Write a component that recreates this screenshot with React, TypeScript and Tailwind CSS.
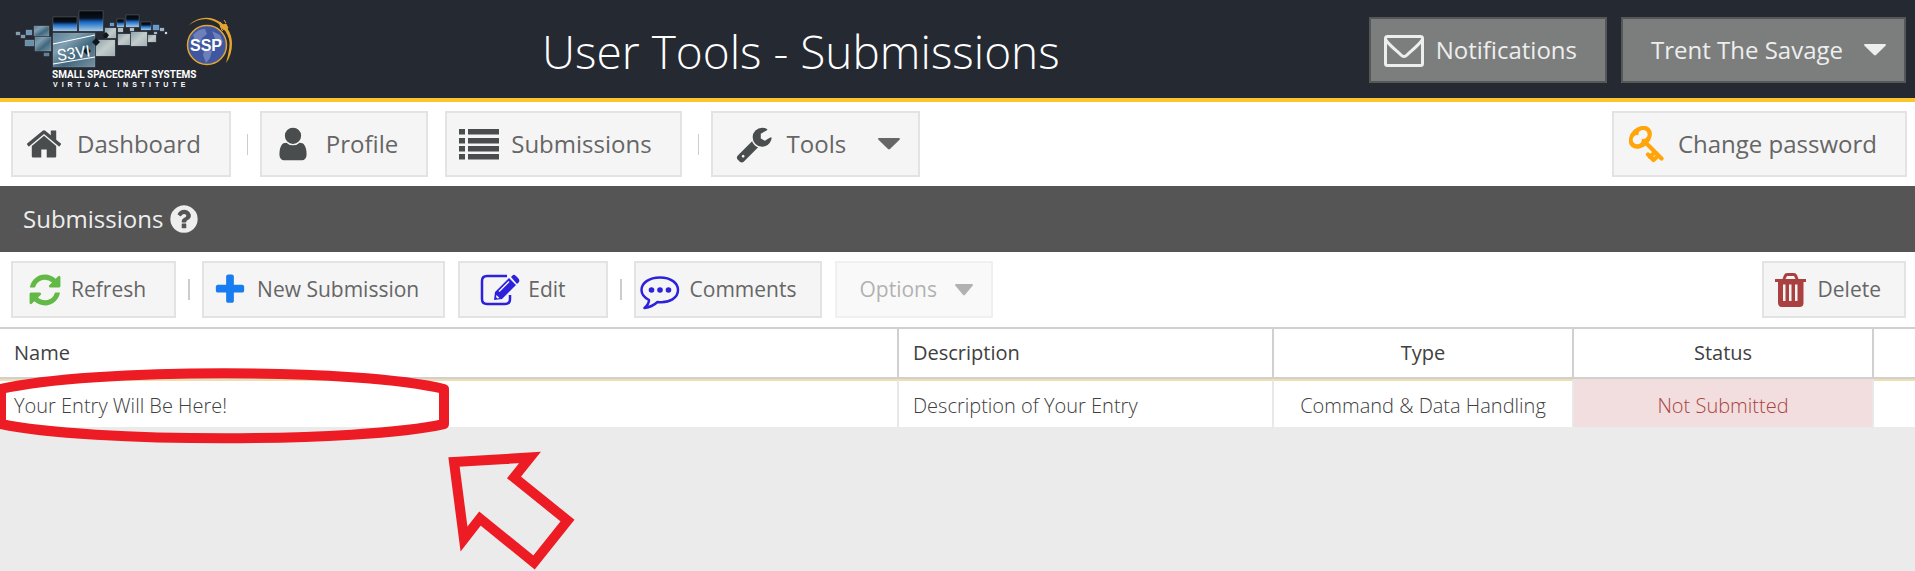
import React from "react";

const P = {
  home: "M1472 992v480q0 26-19 45t-45 19h-384v-384h-256v384h-384q-26 0-45-19t-19-45v-480q0-1 .5-3t.5-3l575-474 575 474q1 2 1 6zm223-69l-62 74q-8 9-21 11h-3q-13 0-21-7l-692-577-692 577q-12 8-24 7-13-2-21-11l-62-74q-8-10-7-23.5t11-21.5l719-599q32-26 76-26t76 26l244 204v-195q0-14 9-23t23-9h192q14 0 23 9t9 23v408l219 182q10 8 11 21.5t-7 23.5z",
  user: "M1536 1399q0 109-62.5 187t-150.5 78h-854q-88 0-150.5-78t-62.5-187q0-85 8.5-160.5t31.5-152 58.5-131 94-89 134.5-34.5q131 128 313 128t313-128q76 0 134.5 34.5t94 89 58.5 131 31.5 152 8.5 160.5zm-256-887q0 159-112.5 271.5t-271.5 112.5-271.5-112.5-112.5-271.5 112.5-271.5 271.5-112.5 271.5 112.5 112.5 271.5z",
  wrench: "M448 1472q0-26-19-45t-45-19-45 19-19 45 19 45 45 19 45-19 19-45zm644-420l-682 682q-37 37-90 37-52 0-91-37l-106-108q-38-36-38-90 0-53 38-91l681-681q39 98 114.5 173.5t173.5 114.5zm634-435q0 39-23 106-47 134-164.5 217.5t-258.5 83.5q-185 0-316.5-131.5t-131.5-316.5 131.5-316.5 316.5-131.5q58 0 121.5 16.5t107.5 46.5q16 11 16 28t-16 28l-293 169v224l193 107q5-3 79-48.5t135.5-81 70.5-35.5q15 0 23.5 10t8.5 25z",
  refresh: "M1639 1056q0 5-1 7-64 268-268 434.5t-478 166.5q-146 0-282.5-55t-243.5-157l-129 129q-19 19-45 19t-45-19-19-45v-448q0-26 19-45t45-19h448q26 0 45 19t19 45-19 45l-137 137q71 66 161 102t187 36q134 0 250-65t186-179q11-17 53-117 8-23 30-23h192q13 0 22.5 9.5t9.5 22.5zm25-800v448q0 26-19 45t-45 19h-448q-26 0-45-19t-19-45 19-45l138-138q-148-137-349-137-134 0-250 65t-186 179q-11 17-53 117-8 23-30 23h-199q-13 0-22.5-9.5t-9.5-22.5v-7q65-268 270-434.5t480-166.5q146 0 284 55.5t245 156.5l130-129q19-19 45-19t45 19 19 45z",
  plus: "M1600 736v192q0 40-28 68t-68 28h-416v416q0 40-28 68t-68 28h-192q-40 0-68-28t-28-68v-416h-416q-40 0-68-28t-28-68v-192q0-40 28-68t68-28h416v-416q0-40 28-68t68-28h192q40 0 68 28t28 68v416h416q40 0 68 28t28 68z",
  help: "M1024 1376v-192q0-14-9-23t-23-9h-192q-14 0-23 9t-9 23v192q0 14 9 23t23 9h192q14 0 23-9t9-23zm256-672q0-88-55.5-163t-138.5-116-170-41q-243 0-371 213-15 24 8 42l132 100q7 6 19 6 16 0 25-12 53-68 86-92 34-24 86-24 48 0 85.5 26t37.5 59q0 38-20 61t-68 45q-63 28-115.5 86.5t-52.5 125.5v36q0 14 9 23t23 9h192q14 0 23-9t9-23q0-19 21.5-49.5t54.5-49.5q32-18 49-28.5t46-35 44.5-48 28-60.5 12.5-81zm384 192q0 209-103 385.5t-279.5 279.5-385.5 103-385.5-103-279.5-279.5-103-385.5 103-385.5 279.5-279.5 385.5-103 385.5 103 279.5 279.5 103 385.5z",
};

function Glyph({ d, className }: { d: string; className: string }) {
  return (
    <svg viewBox="0 0 1792 1792" fill="currentColor" aria-hidden="true" className={`shrink-0 ${className}`}>
      <path d={d} />
    </svg>
  );
}

function Caret({ className }: { className: string }) {
  return (
    <svg viewBox="0 0 22 13" preserveAspectRatio="none" fill="currentColor" aria-hidden="true" className={`shrink-0 ${className}`}>
      <path d="M1 0H21Q22.500 .5 21.500 2L12 12Q11 13 10 12L.5 2Q-.5 .5 1 0Z" />
    </svg>
  );
}

function ListIcon() {
  return (
    <svg viewBox="0 0 40 31" fill="currentColor" aria-hidden="true" className="h-[31px] w-10 shrink-0 text-[#4a4d4e]">
      {[0, 9, 17, 25].map((y) => (
        <path key={y} d={`M0 ${y}h6v5.500h-6zM9 ${y}h31v5.500h-31z`} />
      ))}
    </svg>
  );
}

function Envelope() {
  return (
    <svg viewBox="0 0 40 34" fill="none" stroke="currentColor" strokeWidth="3" strokeLinejoin="round" aria-hidden="true" className="h-[34px] w-10 shrink-0">
      <rect x="1.500" y="3.500" width="37" height="29" rx="2" />
      <path d="M2 7C4 11 14 19 17 22Q20 25 23 22C26 19 36 11 38 7" />
    </svg>
  );
}

function KeyIcon() {
  return (
    <svg viewBox="0 0 35 37" fill="currentColor" aria-hidden="true" className="h-[37px] w-[35px] shrink-0 text-[#ffa50a]">
      <ellipse cx="11.300" cy="11.300" rx="13" ry="9.800" transform="rotate(-45 11.300 11.300)" />
      <circle cx="14" cy="8.500" r="4.600" fill="#f5f5f5" />
      <circle cx="8.300" cy="13.700" r="4.600" fill="#f5f5f5" />
      <path d="M17 17L32.500 32.500M26 26L21 31M19 28.500L24.500 34M29 30L24.500 34" fill="none" stroke="currentColor" strokeWidth="4.200" strokeLinecap="round" />
    </svg>
  );
}

function EditIcon() {
  return (
    <svg viewBox="0 0 40 32" fill="currentColor" aria-hidden="true" className="h-8 w-10 shrink-0 text-[#2d22dc]">
      <path d="M27 2H7Q2 2 2 7V25Q2 30 7 30H25Q30 30 30 25V21" fill="none" stroke="currentColor" strokeWidth="2.500" />
      <path d="M14 26L15 18L29 4L36 11L22 25ZM31 3L33 1Q34 0 36 2L38 4Q40 6 39 8L37 10Z" />
      <path d="M16.500 21L19.500 24L17.500 24.500L16 23ZM18.500 17L28.500 7L29.500 8L19.500 18Z" fill="#f5f5f5" />
    </svg>
  );
}

function CommentIcon() {
  return (
    <svg viewBox="0 -7 40 41" fill="currentColor" aria-hidden="true" className="h-[41px] w-10 shrink-0 text-[#2d22dc]">
      <path d="M20 1.500C31 1.500 38 7 38 14C38 21.500 30 27.500 17.500 26Q12 31 4.500 32Q9 28 9 24Q1.500 20 1.500 14C1.500 7 9 1.500 20 1.500Z" fill="none" stroke="currentColor" strokeWidth="2.500" strokeLinejoin="round" />
      <circle cx="11.500" cy="14" r="2.800" />
      <circle cx="20" cy="14" r="2.800" />
      <circle cx="28.500" cy="14" r="2.800" />
    </svg>
  );
}

function TrashIcon() {
  return (
    <svg viewBox="0 0 31 34" fill="currentColor" aria-hidden="true" className="h-[34px] w-[31px] shrink-0 text-[#ab4040]">
      <path fillRule="evenodd" d="M0 6H7.500L9 2Q10 0 12 0H19Q21 0 22 2L23.500 6H31V9H28.500V30Q28.500 34 24.500 34H7Q3 34 3 30V9H0ZM10.500 6H20.500L19 3H12ZM8 11.500V28H10.500V11.500ZM14 11.500V28H16.500V11.500ZM20 11.500V28H22.500V11.500Z" />
    </svg>
  );
}

/* x, y, width, height, fill of each photo tile of the mosaic */
const tiles: [number, number, number, number, string][] = [
  [16, 32, 4, 3, "#7f9cae"], [21, 35, 4, 3, "#7f9cae"], [26, 30, 6, 5, "#6f9ab8"], [34, 26, 15, 10, "url(#cloud)"],
  [25, 40, 9, 6, "#6890a8"], [35, 37, 16, 14, "url(#cloud)"], [44, 53, 5, 3, "#587d95"], [53, 17, 24, 14, "url(#limb)"],
  [79, 11, 24, 20, "url(#limb)"], [53, 33, 42, 34, "url(#cloud)"], [96, 40, 19, 16, "url(#pale)"], [105, 28, 11, 10, "url(#pale)"],
  [110, 23, 4, 3, "#5d9bd0"], [117, 19, 7, 8, "url(#limb)"], [126, 15, 13, 12, "url(#limb)"], [118, 28, 5, 4, "#b9c3c6"],
  [130, 28, 4, 3, "#b9c3c6"], [118, 34, 12, 11, "url(#pale)"], [131, 32, 16, 14, "url(#pale)"], [141, 22, 10, 8, "url(#limb)"],
  [153, 25, 6, 5, "#5d9bd0"], [148, 35, 8, 7, "url(#pale)"], [160, 28, 4, 3, "#9fb4c4"], [154, 32, 3, 2, "#9fb4c4"], [165, 32, 2, 2, "#dde4e8"],
];

function Logo() {
  return (
    <svg viewBox="0 0 240 98" role="img" aria-label="S3VI and SSP" className="h-[98px] w-60 shrink-0">
      <defs>
        <linearGradient id="limb" x1="0" y1="0" x2="0" y2="1">
          <stop offset="0" stopColor="#050505" /><stop offset=".35" stopColor="#08111f" /><stop offset=".55" stopColor="#1769c4" /><stop offset="1" stopColor="#a5cbe6" />
        </linearGradient>
        <linearGradient id="cloud" x1="0" y1="0" x2="1" y2="1">
          <stop offset="0" stopColor="#5b8099" /><stop offset=".3" stopColor="#7f9eb0" /><stop offset=".6" stopColor="#41687f" /><stop offset="1" stopColor="#7693a3" />
        </linearGradient>
        <linearGradient id="pale" x1="0" y1="0" x2="1" y2="1">
          <stop offset="0" stopColor="#8aa4b0" /><stop offset=".5" stopColor="#c4ccca" /><stop offset="1" stopColor="#9fb0b5" />
        </linearGradient>
      </defs>
      {tiles.map(([x, y, w, h, fill]) => (
        <rect key={`${x}-${y}`} x={x} y={y} width={w} height={h} fill={fill} stroke="#a9b6bf" strokeOpacity=".5" strokeWidth=".5" />
      ))}
      <path d="M92 42l4-4 4 4-4 4zM83 51l4-4 4 4-4 4zM103 35l3-3 3 3-2 3h-3z" fill="#10151b" />
      <path d="M53 44L95 35M53 64L95 57" stroke="#fff" strokeWidth="1.200" />
      <text x="0" y="0" transform="translate(58 61) rotate(-8)" fill="#fff" fontFamily="Roboto, sans-serif" fontSize="16">S3VI</text>
      <text x="52" y="78" fill="#fff" fontFamily="Roboto, sans-serif" fontWeight="700" fontSize="10">SMALL SPACECRAFT SYSTEMS</text>
      <text x="53" y="87" fill="#fff" fontFamily="'Liberation Sans', sans-serif" fontWeight="700" fontSize="7" letterSpacing="4">VIRTUAL INSTITUTE</text>
      <circle cx="207" cy="45" r="19.500" fill="#3f57a0" stroke="#e5a530" strokeWidth="1.500" />
      <path d="M193 35q6-7 12-6l2 5-5 4-2 6-5-3zM205 48l7 3-2 7-4 5-3-8zM212 31l8 4 3 7-7-1z" fill="#8292c4" opacity=".7" />
      <path d="M189 25Q200 15 214 19Q232 26 232 44Q232 55 226 63Q231 45 229 39Q223 21 206 19Q197 19 189 25Z" fill="#e5a530" />
      <path d="M220 22l3 3 3-1 2 4-3 2-4-2-1-3zM224 20l2 3M221 29l2 2" fill="#e5a530" stroke="#e5a530" />
      <text x="190" y="51" fill="#fff" fontFamily="'Liberation Sans', sans-serif" fontWeight="700" fontSize="16">SSP</text>
    </svg>
  );
}

const box = "flex items-center border-2 whitespace-nowrap";
const nav = `${box} h-[66px] border-[#e3e3e3] bg-[#f5f5f5] text-[24px] text-[#666]`;
const tool = `${box} h-[57px] border-[#e3e3e3] bg-[#f5f5f5] text-[21px] text-[#666]`;
const top = `${box} h-[66px] border-[#555857] bg-[#7c7e7d] text-[24px] text-[#eee]`;
const th = "border-r-2 border-[#d0d0d0] px-[14px] font-normal";
const td = "border-r-2 border-[#e8e8e8] px-[14px] pt-[3px]";

export default function App() {
  return (
    <div className="relative flex min-h-screen flex-col overflow-hidden bg-[#ebebeb] font-['Open_Sans','Noto_Sans',sans-serif]">
      <header className="flex items-center border-b-4 border-[#fbc52d] bg-[#252932] pr-[9px]">
        <Logo />
        <h1 className="grow pt-[3px] text-center text-[46px] leading-[60px] font-light whitespace-nowrap text-white xl:grow-0 xl:pl-[302px]">User Tools - Submissions</h1>
        <div className="ml-auto flex gap-[14px] pt-[2px]">
          <button type="button" className={`${top} gap-3 pr-7 pl-[13px]`}>
            <Envelope />
            Notifications
          </button>
          <button type="button" className={`${top} gap-[21px] pr-[18px] pl-7`}>
            Trent The Savage
            <Caret className="h-3 w-[22px]" />
          </button>
        </div>
      </header>

      <nav className="flex items-center bg-white py-[9px] pr-2 pl-[11px]">
        <button type="button" className={`${nav} gap-[14px] pr-7 pl-3`}>
          <Glyph d={P.home} className="size-[38px] text-[#4a4d4e]" />
          Dashboard
        </button>
        <span className="mr-3 ml-4 h-[21px] w-px bg-[#ccc]" />
        <button type="button" className={`${nav} gap-[14px] pr-7 pl-3`}>
          <Glyph d={P.user} className="size-[38px] text-[#4a4d4e]" />
          Profile
        </button>
        <button type="button" className={`${nav} ml-[17px] gap-3 pr-7 pl-3`}>
          <ListIcon />
          Submissions
        </button>
        <span className="mr-3 ml-4 h-[21px] w-px bg-[#ccc]" />
        <button type="button" className={`${nav} pr-[18px] pl-[22px]`}>
          <Glyph d={P.wrench} className="mr-[14px] size-[38px] text-[#4a4d4e]" />
          Tools
          <Caret className="ml-8 h-3 w-[22px]" />
        </button>
        <button type="button" className={`${nav} ml-auto gap-[14px] pr-7 pl-[15px]`}>
          <KeyIcon />
          Change password
        </button>
      </nav>

      <div className="flex h-[66px] items-center gap-[5px] bg-[#555] pl-[23px] text-[#eee]">
        <h2 className="text-[24px]">Submissions</h2>
        <button type="button" aria-label="Help">
          <Glyph d={P.help} className="size-8" />
        </button>
      </div>

      <div className="flex items-center border-b-2 border-[#d0d0d0] bg-white py-[9px] pr-[9px] pl-[11px]">
        <button type="button" className={`${tool} gap-2 pr-7 pl-[14px]`}>
          <Glyph d={P.refresh} className="size-9 text-[#62b946]" />
          Refresh
        </button>
        <span className="mx-3 h-[21px] w-0.5 bg-[#ccc]" />
        <button type="button" className={`${tool} gap-[9px] pr-6 pl-2`}>
          <Glyph d={P.plus} className="size-9 text-[#177df0]" />
          New Submission
        </button>
        <button type="button" className={`${tool} ml-[13px] gap-2 pr-10 pl-5`}>
          <EditIcon />
          Edit
        </button>
        <span className="mx-3 h-[21px] w-0.5 bg-[#ccc]" />
        <button type="button" className={`${tool} gap-[10px] pr-6 pl-1`}>
          <CommentIcon />
          Comments
        </button>
        <button type="button" disabled className={`${tool} ml-[13px] gap-[18px] pr-[18px] pl-[22px] opacity-50`}>
          Options
          <Caret className="h-3 w-[18px]" />
        </button>
        <button type="button" className={`${tool} ml-auto gap-3 pr-[23px] pl-[11px]`}>
          <TrashIcon />
          Delete
        </button>
      </div>

      <table className="w-full table-fixed border-separate border-spacing-0 bg-white text-[20px] text-[#404040]">
        <colgroup>
          <col className="w-[899px]" />
          <col className="w-[375px]" />
          <col className="w-[300px]" />
          <col className="w-[300px]" />
          <col />
        </colgroup>
        <thead>
          <tr className="h-[50px]">
            <th className={`${th} border-b-2 text-left`}>Name</th>
            <th className={`${th} border-b-2 text-left`}>Description</th>
            <th className={`${th} border-b-2`}>Type</th>
            <th className={`${th} border-b-2`}>Status</th>
            <th aria-label="Actions" className="border-b-2 border-[#d0d0d0]" />
          </tr>
        </thead>
        <tbody className="font-light">
          <tr className="h-12">
            <td className={`${td} border-t-2 border-t-[#efdfae]`}>Your Entry Will Be Here!</td>
            <td className={`${td} border-t-2 border-t-[#efdfae]`}>Description of Your Entry</td>
            <td className={`${td} border-t-2 border-t-[#efdfae] text-center`}>Command &amp; Data Handling</td>
            <td className={`${td} border-t-2 border-t-[#f2dede] bg-[#f2dede] text-center text-[#a94442]`}>Not Submitted</td>
            <td className="border-t-2 border-[#efdfae]" />
          </tr>
        </tbody>
      </table>

      <svg viewBox="0 0 600 211" fill="none" stroke="#ed1c24" strokeWidth="10" aria-hidden="true" className="pointer-events-none absolute top-[360px] left-0 h-[211px] w-[600px]">
        <path d="M1 29C90 8 360 8 444 29V64C360 83 90 83 1 64Z" strokeLinejoin="round" />
        <path d="M454 102L530 97.500L514 117.500L567.500 160.500L534 202.500L480 158.500L464 179Z" />
      </svg>
    </div>
  );
}
